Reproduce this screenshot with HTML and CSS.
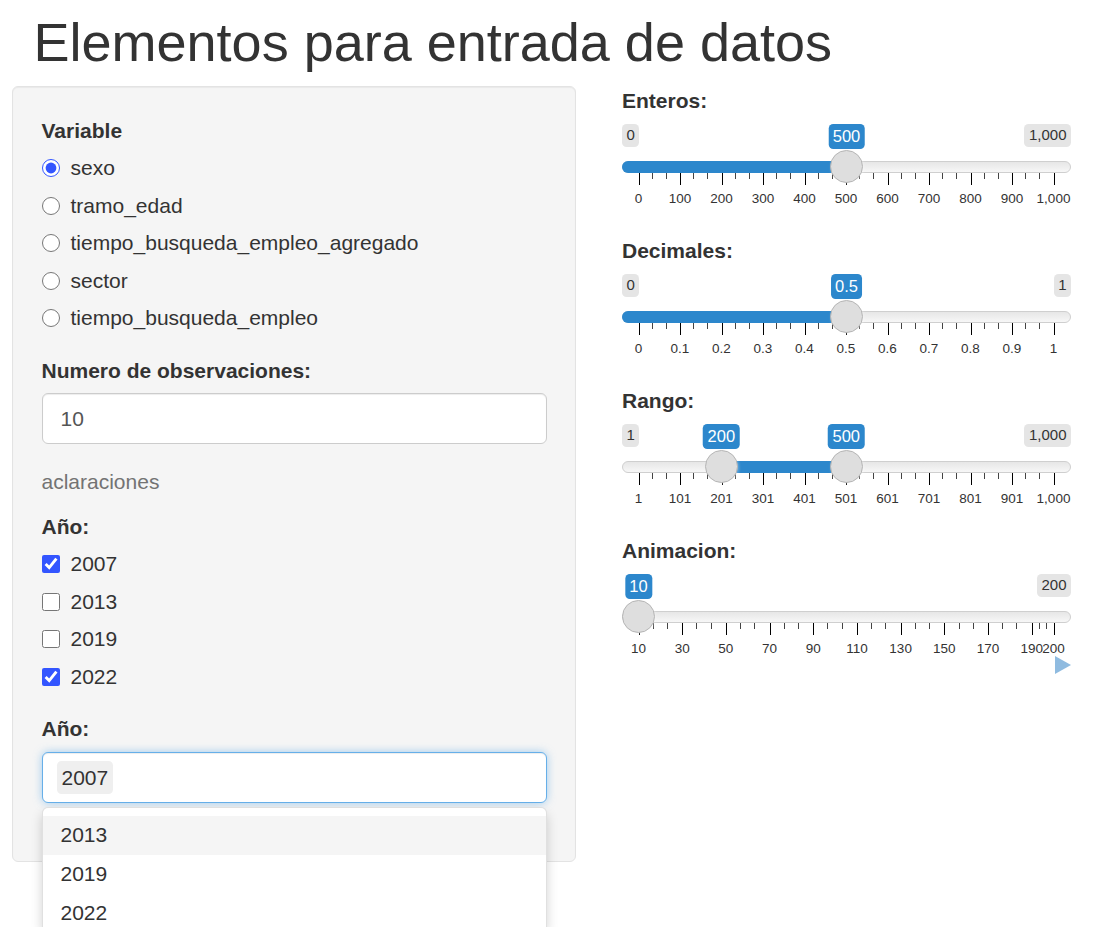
FILE: index.html
```html
<!DOCTYPE html>
<html lang="es">
<head>
<meta charset="utf-8">
<title>Elementos para entrada de datos</title>
<link rel="stylesheet" href="styles.css">
</head>
<body>
<h1 class="title">Elementos para entrada de datos</h1>
<div class="layout">
  <aside class="well">
    <div class="group">
      <div class="label">Variable</div>
      <div class="options">
        <label class="opt"><input type="radio" name="variable" checked><span>sexo</span></label>
        <label class="opt"><input type="radio" name="variable"><span>tramo_edad</span></label>
        <label class="opt"><input type="radio" name="variable"><span>tiempo_busqueda_empleo_agregado</span></label>
        <label class="opt"><input type="radio" name="variable"><span>sector</span></label>
        <label class="opt"><input type="radio" name="variable"><span>tiempo_busqueda_empleo</span></label>
      </div>
    </div>
    <div class="group">
      <div class="label">Numero de observaciones:</div>
      <input class="num" type="number" value="10">
    </div>
    <div class="help">aclaraciones</div>
    <div class="group">
      <div class="label">Año:</div>
      <div class="options">
        <label class="opt"><input type="checkbox" checked><span>2007</span></label>
        <label class="opt"><input type="checkbox"><span>2013</span></label>
        <label class="opt"><input type="checkbox"><span>2019</span></label>
        <label class="opt"><input type="checkbox" checked><span>2022</span></label>
      </div>
    </div>
    <div class="group">
      <div class="label">Año:</div>
      <div class="selectize">
        <div class="sel-input"><span class="chip">2007</span></div>
        <div class="dropdown">
          <div class="option active">2013</div>
          <div class="option">2019</div>
          <div class="option">2022</div>
        </div>
      </div>
    </div>
  </aside>

  <main class="sliders">
    <div class="sgroup">
      <div class="label">Enteros:</div>
      <div class="irs" style="--p:0.5">
        <div class="irs-mm"><span class="mm">0</span><span class="mm">1,000</span></div>
        <span class="single">500</span>
        <div class="track">
          <div class="line"></div>
          <div class="bar bar-single"></div>
          <div class="handle"></div>
        </div>
        <div class="grid">
          <span class="seg"><b>0</b></span><span class="seg"><b>100</b></span><span class="seg"><b>200</b></span><span class="seg"><b>300</b></span><span class="seg"><b>400</b></span><span class="seg"><b>500</b></span><span class="seg"><b>600</b></span><span class="seg"><b>700</b></span><span class="seg"><b>800</b></span><span class="seg"><b>900</b></span><span class="seg end"><b>1,000</b></span>
        </div>
      </div>
    </div>

    <div class="sgroup">
      <div class="label">Decimales:</div>
      <div class="irs" style="--p:0.5">
        <div class="irs-mm"><span class="mm">0</span><span class="mm">1</span></div>
        <span class="single">0.5</span>
        <div class="track">
          <div class="line"></div>
          <div class="bar bar-single"></div>
          <div class="handle"></div>
        </div>
        <div class="grid">
          <span class="seg"><b>0</b></span><span class="seg"><b>0.1</b></span><span class="seg"><b>0.2</b></span><span class="seg"><b>0.3</b></span><span class="seg"><b>0.4</b></span><span class="seg"><b>0.5</b></span><span class="seg"><b>0.6</b></span><span class="seg"><b>0.7</b></span><span class="seg"><b>0.8</b></span><span class="seg"><b>0.9</b></span><span class="seg end"><b>1</b></span>
        </div>
      </div>
    </div>

    <div class="sgroup">
      <div class="label">Rango:</div>
      <div class="irs" style="--a:0.1992;--b:0.4995">
        <div class="irs-mm"><span class="mm">1</span><span class="mm">1,000</span></div>
        <span class="single from">200</span>
        <span class="single to">500</span>
        <div class="track">
          <div class="line"></div>
          <div class="bar bar-range"></div>
          <div class="handle h-from"></div>
          <div class="handle h-to"></div>
        </div>
        <div class="grid">
          <span class="seg"><b>1</b></span><span class="seg"><b>101</b></span><span class="seg"><b>201</b></span><span class="seg"><b>301</b></span><span class="seg"><b>401</b></span><span class="seg"><b>501</b></span><span class="seg"><b>601</b></span><span class="seg"><b>701</b></span><span class="seg"><b>801</b></span><span class="seg"><b>901</b></span><span class="seg end"><b>1,000</b></span>
        </div>
      </div>
    </div>

    <div class="sgroup">
      <div class="label">Animacion:</div>
      <div class="irs" style="--p:0">
        <div class="irs-mm mm-right"><span class="mm">200</span></div>
        <span class="single">10</span>
        <div class="track">
          <div class="line"></div>
          <div class="handle"></div>
        </div>
        <div class="grid grid-anim">
          <span class="seg"><b>10</b></span><span class="seg"><b>30</b></span><span class="seg"><b>50</b></span><span class="seg"><b>70</b></span><span class="seg"><b>90</b></span><span class="seg"><b>110</b></span><span class="seg"><b>130</b></span><span class="seg"><b>150</b></span><span class="seg"><b>170</b></span><span class="seg short"><b>190</b></span><span class="seg end"><b>200</b></span>
        </div>
      </div>
      <div class="play">
        <svg width="16" height="18" viewBox="0 0 16 18" aria-hidden="true"><path d="M0 0 L16 9 L0 18 Z" fill="#8fbbe0"/></svg>
      </div>
    </div>
  </main>
</div>
</body>
</html>
```

FILE: styles.css
```css
* { box-sizing: border-box; }
html, body { margin: 0; padding: 0; }
body {
  min-height: 927px;
  font-family: "Liberation Sans", Arial, Helvetica, sans-serif;
  font-size: 21px;
  line-height: 30px;
  color: #333;
  background: #fff;
}

.title {
  font-size: 54px;
  font-weight: normal;
  line-height: 59.4px;
  margin: 12.6px 0 14px 33.5px;
  color: #333;
}

.layout {
  display: flex;
  align-items: flex-start;
  gap: 46px;
  padding-left: 12px;
}

/* ---------- sidebar ---------- */
.well {
  flex: none;
  width: 564px;
  background: #f5f5f5;
  border: 1px solid #e3e3e3;
  border-radius: 6px;
  box-shadow: inset 0 1px 1px rgba(0, 0, 0, 0.05);
  padding: 28.5px;
}

.group { margin-bottom: 22.5px; }
.group:last-child { margin-bottom: 30px; }

.label {
  font-weight: bold;
  margin-bottom: 7.5px;
}

.options {
  display: flex;
  flex-direction: column;
  gap: 7.5px;
}

.opt {
  display: flex;
  align-items: center;
  gap: 11px;
  height: 30px;
}

.opt input {
  flex: none;
  margin: 0;
  width: 18px;
  height: 18px;
  accent-color: #3355ff;
}

.num {
  display: block;
  width: 100%;
  height: 51px;
  padding: 9px 18px;
  font: inherit;
  color: #555;
  background: #fff;
  border: 1px solid #ccc;
  border-radius: 6px;
  box-shadow: inset 0 1px 1px rgba(0, 0, 0, 0.075);
  outline: none;
}

.help {
  color: #737373;
  margin-bottom: 15px;
}

.selectize { position: relative; }

.sel-input {
  display: flex;
  align-items: flex-start;
  height: 51px;
  padding: 8.5px 14.5px;
  background: #fff;
  border: 1px solid #66afe9;
  border-radius: 6px;
  box-shadow: inset 0 1px 1px rgba(0, 0, 0, 0.075), 0 0 8px rgba(102, 175, 233, 0.6);
}

.chip {
  background: #efefef;
  padding: 1.5px 4.5px;
  line-height: 30px;
  border-radius: 4.5px;
  color: #333;
}

.dropdown {
  position: absolute;
  top: calc(100% + 4.5px);
  left: 0;
  right: 0;
  z-index: 10;
  max-height: 120px;
  overflow: hidden;
  padding: 7.5px 0 0;
  background: #fff;
  border: 1px solid rgba(0, 0, 0, 0.12);
  border-bottom: 0;
  border-radius: 6px 6px 0 0;
  box-shadow: 0 6px 12px rgba(0, 0, 0, 0.175);
}

.option {
  padding: 4.5px 18px;
  line-height: 30px;
  color: #333;
}

.option.active { background: #f5f5f5; }

/* ---------- sliders ---------- */
.sliders {
  flex: none;
  width: 449px;
}

.sgroup { margin-bottom: 22.5px; }

.irs {
  position: relative;
  height: 90px;
}

.irs-mm {
  display: flex;
  justify-content: space-between;
  height: 23px;
}

.mm-right { justify-content: flex-end; }

.mm {
  font-size: 15px;
  line-height: 20px;
  padding: 1.5px 4.5px;
  background: rgba(0, 0, 0, 0.1);
  border-radius: 4.5px;
  color: #333;
}

.single {
  position: absolute;
  top: 0;
  left: calc(16.5px + var(--p) * (100% - 33px));
  transform: translateX(-50%);
  font-size: 16.5px;
  line-height: 22px;
  padding: 1.5px 4.5px;
  color: #fff;
  background: #2c87cc;
  border-radius: 4.5px;
  white-space: nowrap;
  z-index: 2;
}

.single.from { left: calc(16.5px + var(--a) * (100% - 33px)); }
.single.to { left: calc(16.5px + var(--b) * (100% - 33px)); }

.track {
  position: relative;
  height: 12px;
  margin-top: 14.5px;
}

.line {
  height: 12px;
  border: 1px solid #cfcfcf;
  border-radius: 12px;
  background: linear-gradient(to bottom, #dedede -50%, #fff 150%);
}

.bar {
  position: absolute;
  top: 0;
  height: 12px;
  background: #2c87cc;
}

.bar-single {
  left: 0;
  width: calc(16.5px + var(--p) * (100% - 33px));
  border-radius: 12px 0 0 12px;
}

.bar-range {
  left: calc(16.5px + var(--a) * (100% - 33px));
  width: calc((var(--b) - var(--a)) * (100% - 33px));
}

.handle {
  position: absolute;
  top: -11.5px;
  left: calc(var(--p) * (100% - 33px));
  width: 33px;
  height: 33px;
  border-radius: 50%;
  background: #dedede;
  border: 1px solid #b5b5b5;
  box-shadow: 1px 1px 3px rgba(255, 255, 255, 0.3);
}

.h-from { left: calc(var(--a) * (100% - 33px)); }
.h-to { left: calc(var(--b) * (100% - 33px)); }

.grid {
  display: flex;
  height: 40.5px;
  margin: 0 16.5px;
}

.seg {
  flex: 1 1 0;
  background:
    linear-gradient(#000, #000) 0 0 / 1px 12px no-repeat,
    linear-gradient(#444, #444) 33.333% 0 / 1px 6px no-repeat,
    linear-gradient(#444, #444) 66.667% 0 / 1px 6px no-repeat;
}

.grid-anim .seg { flex-grow: 2; }
.grid-anim .seg.short { flex-grow: 1; }

.seg.end,
.grid-anim .seg.end {
  flex: 0 0 1px;
  background: linear-gradient(#000, #000) 0 0 / 1px 12px no-repeat;
}

.seg b {
  display: flex;
  justify-content: center;
  width: 0;
  margin-top: 17.5px;
  font-weight: normal;
  font-size: 13.5px;
  line-height: 15.5px;
  white-space: nowrap;
  color: #333;
}

.play {
  display: flex;
  justify-content: flex-end;
  margin-top: -8px;
}
```
